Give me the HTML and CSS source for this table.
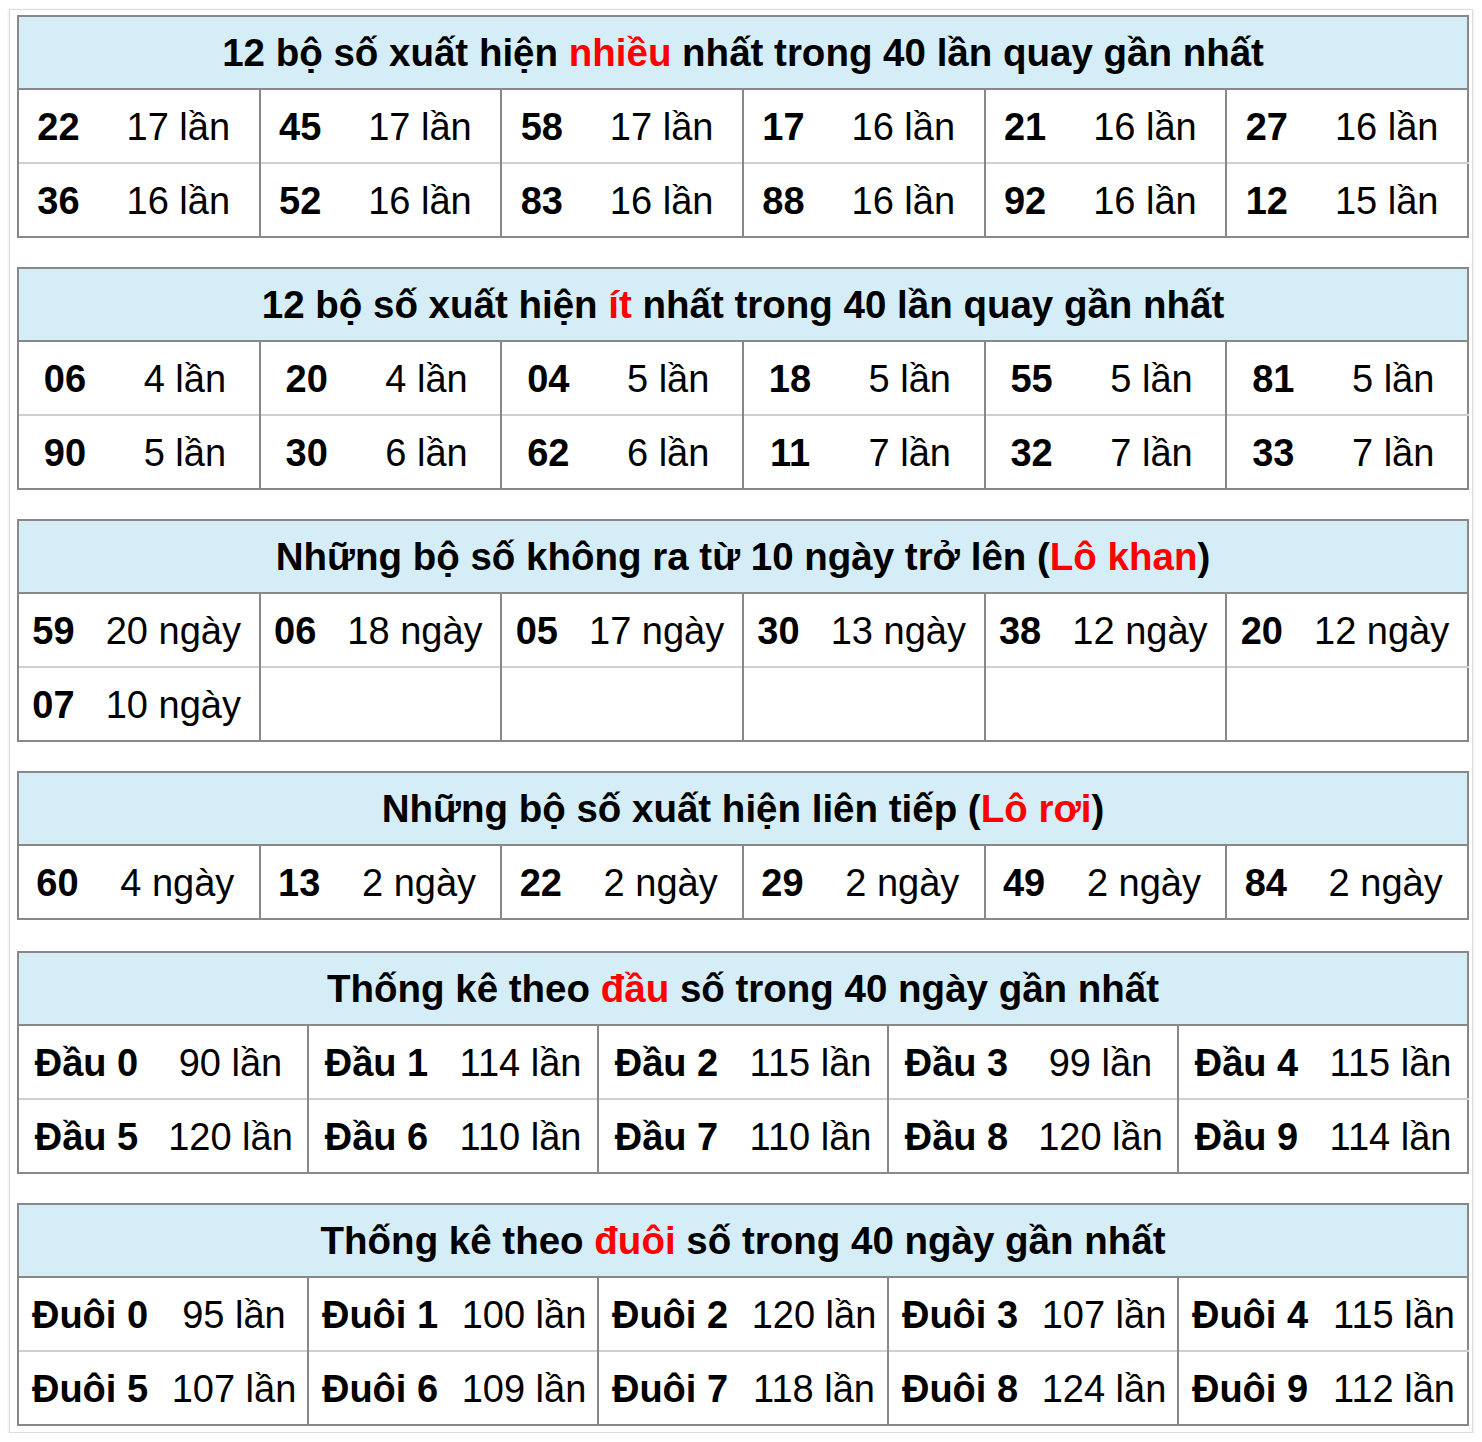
FILE: index.html
```html
<!DOCTYPE html>
<html lang="vi">
<head>
<meta charset="utf-8">
<title>Thống kê</title>
<link rel="stylesheet" href="styles.css">
</head>
<body>
<div class="wrap">

<table class="stat t-most">
<colgroup><col class="n"><col class="c"><col class="n"><col class="c"><col class="n"><col class="c"><col class="n"><col class="c"><col class="n"><col class="c"><col class="n"><col class="c"></colgroup>
<tr><th colspan="12">12 bộ số xuất hiện <span class="hl">nhiều</span> nhất trong 40 lần quay gần nhất</th></tr>
<tr><td class="num">22</td><td>17 lần</td><td class="num">45</td><td>17 lần</td><td class="num">58</td><td>17 lần</td><td class="num">17</td><td>16 lần</td><td class="num">21</td><td>16 lần</td><td class="num">27</td><td>16 lần</td></tr>
<tr><td class="num">36</td><td>16 lần</td><td class="num">52</td><td>16 lần</td><td class="num">83</td><td>16 lần</td><td class="num">88</td><td>16 lần</td><td class="num">92</td><td>16 lần</td><td class="num">12</td><td>15 lần</td></tr>
</table>

<table class="stat t-least">
<colgroup><col class="n"><col class="c"><col class="n"><col class="c"><col class="n"><col class="c"><col class="n"><col class="c"><col class="n"><col class="c"><col class="n"><col class="c"></colgroup>
<tr><th colspan="12">12 bộ số xuất hiện <span class="hl">ít</span> nhất trong 40 lần quay gần nhất</th></tr>
<tr><td class="num">06</td><td>4 lần</td><td class="num">20</td><td>4 lần</td><td class="num">04</td><td>5 lần</td><td class="num">18</td><td>5 lần</td><td class="num">55</td><td>5 lần</td><td class="num">81</td><td>5 lần</td></tr>
<tr><td class="num">90</td><td>5 lần</td><td class="num">30</td><td>6 lần</td><td class="num">62</td><td>6 lần</td><td class="num">11</td><td>7 lần</td><td class="num">32</td><td>7 lần</td><td class="num">33</td><td>7 lần</td></tr>
</table>

<table class="stat t-khan">
<colgroup><col class="n"><col class="c"><col class="n"><col class="c"><col class="n"><col class="c"><col class="n"><col class="c"><col class="n"><col class="c"><col class="n"><col class="c"></colgroup>
<tr><th colspan="12">Những bộ số không ra từ 10 ngày trở lên (<span class="hl">Lô khan</span>)</th></tr>
<tr><td class="num">59</td><td>20 ngày</td><td class="num">06</td><td>18 ngày</td><td class="num">05</td><td>17 ngày</td><td class="num">30</td><td>13 ngày</td><td class="num">38</td><td>12 ngày</td><td class="num">20</td><td>12 ngày</td></tr>
<tr><td class="num">07</td><td>10 ngày</td><td class="num"></td><td></td><td class="num"></td><td></td><td class="num"></td><td></td><td class="num"></td><td></td><td class="num"></td><td></td></tr>
</table>

<table class="stat t-roi">
<colgroup><col class="n"><col class="c"><col class="n"><col class="c"><col class="n"><col class="c"><col class="n"><col class="c"><col class="n"><col class="c"><col class="n"><col class="c"></colgroup>
<tr><th colspan="12">Những bộ số xuất hiện liên tiếp (<span class="hl">Lô rơi</span>)</th></tr>
<tr><td class="num">60</td><td>4 ngày</td><td class="num">13</td><td>2 ngày</td><td class="num">22</td><td>2 ngày</td><td class="num">29</td><td>2 ngày</td><td class="num">49</td><td>2 ngày</td><td class="num">84</td><td>2 ngày</td></tr>
</table>

<table class="stat t-dau">
<colgroup><col class="n"><col class="c"><col class="n"><col class="c"><col class="n"><col class="c"><col class="n"><col class="c"><col class="n"><col class="c"></colgroup>
<tr><th colspan="10">Thống kê theo <span class="hl">đầu</span> số trong 40 ngày gần nhất</th></tr>
<tr><td class="num">Đầu 0</td><td>90 lần</td><td class="num">Đầu 1</td><td>114 lần</td><td class="num">Đầu 2</td><td>115 lần</td><td class="num">Đầu 3</td><td>99 lần</td><td class="num">Đầu 4</td><td>115 lần</td></tr>
<tr><td class="num">Đầu 5</td><td>120 lần</td><td class="num">Đầu 6</td><td>110 lần</td><td class="num">Đầu 7</td><td>110 lần</td><td class="num">Đầu 8</td><td>120 lần</td><td class="num">Đầu 9</td><td>114 lần</td></tr>
</table>

<table class="stat t-duoi">
<colgroup><col class="n"><col class="c"><col class="n"><col class="c"><col class="n"><col class="c"><col class="n"><col class="c"><col class="n"><col class="c"></colgroup>
<tr><th colspan="10">Thống kê theo <span class="hl">đuôi</span> số trong 40 ngày gần nhất</th></tr>
<tr><td class="num">Đuôi 0</td><td>95 lần</td><td class="num">Đuôi 1</td><td>100 lần</td><td class="num">Đuôi 2</td><td>120 lần</td><td class="num">Đuôi 3</td><td>107 lần</td><td class="num">Đuôi 4</td><td>115 lần</td></tr>
<tr><td class="num">Đuôi 5</td><td>107 lần</td><td class="num">Đuôi 6</td><td>109 lần</td><td class="num">Đuôi 7</td><td>118 lần</td><td class="num">Đuôi 8</td><td>124 lần</td><td class="num">Đuôi 9</td><td>112 lần</td></tr>
</table>

</div>
</body>
</html>
```
FILE: styles.css
```css
html, body {
  margin: 0;
  padding: 0;
  background: #fff;
}
body {
  font-family: "Liberation Sans", Arial, Helvetica, sans-serif;
  color: #000;
}
.wrap {
  width: 1450px;
  margin: 9px 0 0 9px;
  padding: 5px 5px 6px 7px;
  border: 1px solid #dcdcdc;
  box-shadow: 0 1px 3px rgba(0, 0, 0, 0.12);
}
.stat {
  width: 1450px;
  table-layout: fixed;
  border-collapse: collapse;
  border: 2px solid #888;
  margin-bottom: 29px;
  font-size: 38px;
}
.stat:last-child {
  margin-bottom: 0;
}
.stat.t-roi {
  margin-bottom: 31px;
}
.stat th {
  background: #d5edf7;
  font-weight: bold;
  font-size: 38.5px;
  text-align: center;
  padding: 1px 0 0;
  line-height: 70px;
  border-bottom: 2px solid #888;
}
.hl {
  color: #ff0000;
}
.stat td {
  padding: 3px 0 0;
  line-height: 69px;
  text-align: center;
  white-space: nowrap;
}
.stat tr + tr + tr td {
  border-top: 2px solid #d0d0d0;
}
.stat td.num {
  font-weight: bold;
  border-left: 2px solid #888;
}

.t-most col.n { width: 80px; }
.t-most col.c { width: 161.67px; }
.t-least col.n { width: 93px; }
.t-least col.c { width: 148.67px; }
.t-khan col.n { width: 70px; }
.t-khan col.c { width: 171.67px; }
.t-roi col.n { width: 78px; }
.t-roi col.c { width: 163.67px; }
.t-dau col.n { width: 136px; }
.t-dau col.c { width: 154px; }
.t-duoi col.n { width: 143px; }
.t-duoi col.c { width: 147px; }
```
